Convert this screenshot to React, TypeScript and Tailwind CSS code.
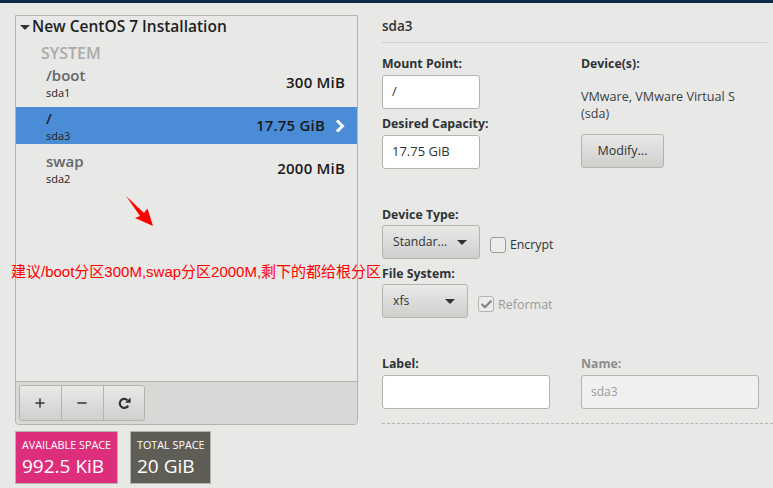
import { Minus, Plus, Check } from 'lucide-react'

const font = { fontFamily: '"Open Sans", sans-serif' }

function Caret({ className = '' }: { className?: string }) {
  return (
    <svg width="10" height="5" viewBox="0 0 10 5" className={className}>
      <path d="M0 0h10L5 5z" fill="#2e3436" />
    </svg>
  )
}

function Row({ name, dev, size, selected }: { name: string; dev: string; size: string; selected?: boolean }) {
  return (
    <div className={`flex h-[37px] items-center pl-[30px] pr-[12px] ${selected ? 'bg-[#4a8cd6]' : ''}`}>
      <div className="flex flex-col">
        <span className={`text-[15px] font-semibold leading-[20px] ${selected ? 'text-[#1c1f1f]' : 'text-[#666666]'}`}>{name}</span>
        <span className="text-[11px] leading-[15px] text-[#222222]">{dev}</span>
      </div>
      <span className="ml-auto text-[15px] font-semibold tracking-[0.2px] text-[#1a1a1a]">{size}</span>
      {selected && (
        <svg width="10" height="14" viewBox="0 0 10 14" className="ml-[10px]">
          <path d="M2 1.5L7.5 7L2 12.5" fill="none" stroke="#ffffff" strokeWidth="3" />
        </svg>
      )}
    </div>
  )
}

function Label({ children, muted }: { children: string; muted?: boolean }) {
  return (
    <span className={`h-[12px] text-[12.3px] font-bold leading-[14px] ${muted ? 'text-[#8c8e8e]' : 'text-[#2e3436]'}`}>
      {children}
    </span>
  )
}

function Field({ label, value, width = 'w-[98px]' }: { label: string; value: string; width?: string }) {
  return (
    <div className="flex flex-col">
      <Label>{label}</Label>
      <div className={`mt-[6px] flex h-[34px] items-center rounded-[3px] border border-[#b3b3b0] bg-white pl-[9px] text-[13px] text-[#2e3436] ${width}`}>
        {value}
      </div>
    </div>
  )
}

function Dropdown({ value, width }: { value: string; width: string }) {
  return (
    <div className={`flex h-[34px] items-center justify-between rounded-[3px] border border-[#b3b3b0] bg-gradient-to-b from-[#e9e9e7] to-[#cfcfcd] pl-[10px] pr-[12px] text-[12.2px] text-[#2e3436] ${width}`}>
      <span>{value}</span>
      <Caret />
    </div>
  )
}

function SpaceCard({ title, value, bg, width }: { title: string; value: string; bg: string; width: string }) {
  return (
    <div className={`flex h-[53px] flex-col border border-[#b3b3b0] pl-[6px] pt-[6px] text-white ${bg} ${width}`}>
      <span className="whitespace-nowrap text-[10.8px] leading-[14px]">{title}</span>
      <span className="mt-[1px] whitespace-nowrap text-[19px] font-medium leading-[26px]">{value}</span>
    </div>
  )
}

export default function App() {
  return (
    <div style={font} className="relative h-[488px] w-[773px] overflow-hidden bg-[#e8e8e7]">
      <div className="h-[3px] bg-[#0f2a45]" />
      <div className="flex pl-[15px] pt-[12px]">
        {/* Left column */}
        <div className="flex w-[343px] flex-col">
          <div className="flex h-[410px] flex-col rounded-b-[4px] border border-[#b3b3b0]">
            <div className="flex h-[22px] items-center gap-[2px] pl-[4px]">
              <Caret />
              <span className="text-[15.5px] font-semibold text-[#1c1f1f]">New CentOS 7 Installation</span>
            </div>
            <div className="mt-[5px] h-[21px] pl-[25px] text-[16px] font-semibold leading-[21px] text-[#ababab]">SYSTEM</div>
            <div className="flex flex-col gap-[6px]">
              <Row name="/boot" dev="sda1" size="300 MiB" />
              <Row name="/" dev="sda3" size="17.75 GiB" selected />
              <Row name="swap" dev="sda2" size="2000 MiB" />
            </div>
            <div className="mt-auto flex h-[43px] items-center rounded-b-[4px] border-t border-[#b3b3b0] bg-[#d8d8d6] pl-[3px]">
              <div className="flex h-[36px] w-[126px] rounded-[3px] border border-[#b3b3b0] bg-gradient-to-b from-[#e9e9e7] to-[#cfcfcd] text-[#2e3436]">
                <div className="flex w-[42px] items-center justify-center border-r border-[#b3b3b0] pr-[2px]"><Plus size={14} strokeWidth={2.5} /></div>
                <div className="flex w-[42px] items-center justify-center border-r border-[#b3b3b0] pr-[2px]"><Minus size={14} strokeWidth={2.5} /></div>
                <div className="flex flex-1 items-center justify-center">
                  <svg width="13" height="13" viewBox="0 0 13 13">
                    <path d="M10.2 8.6A4.5 4.5 0 1 1 9.4 3.2" fill="none" stroke="#2e3436" strokeWidth="2.2" />
                    <path d="M7 5.8L12.6 5.8L12.6 0.4Z" fill="#2e3436" />
                  </svg>
                </div>
              </div>
            </div>
          </div>
          <div className="mt-[6px] flex gap-[12px]">
            <SpaceCard title="AVAILABLE SPACE" value="992.5 KiB" bg="bg-[#dd2e7b]" width="w-[103px]" />
            <SpaceCard title="TOTAL SPACE" value="20 GiB" bg="bg-[#5e5e57]" width="w-[81px]" />
          </div>
        </div>

        {/* Right column */}
        <div className="ml-[24px] flex w-[391px] flex-col">
          <div className="mr-[6px] h-[28px] border-b border-[#d0d0ce] pt-[1px] text-[13.5px] font-semibold leading-[20px] text-[#2e3436]">sda3</div>
          <div className="mt-[14px] flex">
            <div className="flex w-[199px] flex-col gap-[8px]">
              <Field label="Mount Point:" value="/" />
              <Field label="Desired Capacity:" value="17.75 GiB" />
            </div>
            <div className="flex flex-col">
              <Label>Device(s):</Label>
              <span className="mt-[19px] w-[175px] text-[12.6px] leading-[17px] text-[#3c4042]">VMware, VMware Virtual S (sda)</span>
              <div className="mt-[12px] flex h-[34px] w-[83px] items-center justify-center rounded-[3px] border border-[#b3b3b0] bg-gradient-to-b from-[#e9e9e7] to-[#cfcfcd] text-[12.5px] text-[#2e3436]">Modify...</div>
            </div>
          </div>
          <div className="mt-[39px] flex flex-col">
            <Label>Device Type:</Label>
            <div className="mt-[5px] flex">
              <Dropdown value="Standar..." width="w-[98px]" />
              <div className="ml-[10px] mt-[12px] flex h-[16px] items-center gap-[4px] text-[12.3px] text-[#2e3436]">
                <div className="h-[16px] w-[16px] rounded-[3px] border border-[#9a9a98] bg-[#ececea]" />
                <span className="pt-[1px]">Encrypt</span>
              </div>
            </div>
            <div className="mt-[8px] flex flex-col"><Label>File System:</Label></div>
            <div className="mt-[5px] flex">
              <Dropdown value="xfs" width="w-[86px]" />
              <div className="ml-[10px] mt-[12px] flex h-[16px] items-center gap-[4px] text-[12.5px] text-[#9a9c9c]">
                <div className="flex h-[16px] w-[16px] items-center justify-center rounded-[3px] border border-[#b3b3b0] bg-[#ececea]">
                  <Check size={13} strokeWidth={4} className="text-[#808282]" />
                </div>
                <span className="pt-[3px]">Reformat</span>
              </div>
            </div>
          </div>
          <div className="mt-[39px] flex">
            <div className="w-[199px]"><Field label="Label:" value="" width="w-[168px]" /></div>
            <div className="flex flex-col">
              <Label muted>Name:</Label>
              <div className="mt-[6px] flex h-[34px] w-[178px] items-center rounded-[3px] border border-[#b3b3b0] bg-[#f0f0f0] pl-[9px] text-[12px] text-[#9a9c9c]">sda3</div>
            </div>
          </div>
          <div className="mt-[14px] border-t border-dashed border-[#b3b3b0]" />
        </div>
      </div>

      {/* Red annotation drawn over the screenshot */}
      <svg width="30" height="32" viewBox="0 0 30 32" className="absolute left-[125px] top-[195px]">
        <path d="M1 1L19 18L22.5 13.5L28 31L10 23L15 21Z" fill="#ff0000" />
      </svg>
      <span
        style={{ fontFamily: '"Liberation Sans", "Noto Sans CJK SC", sans-serif' }}
        className="absolute left-[11px] top-[263px] whitespace-nowrap text-[15px] leading-[18px] text-[#ff0000]"
      >
        建议/boot分区300M,swap分区2000M,剩下的都给根分区
      </span>
    </div>
  )
}
